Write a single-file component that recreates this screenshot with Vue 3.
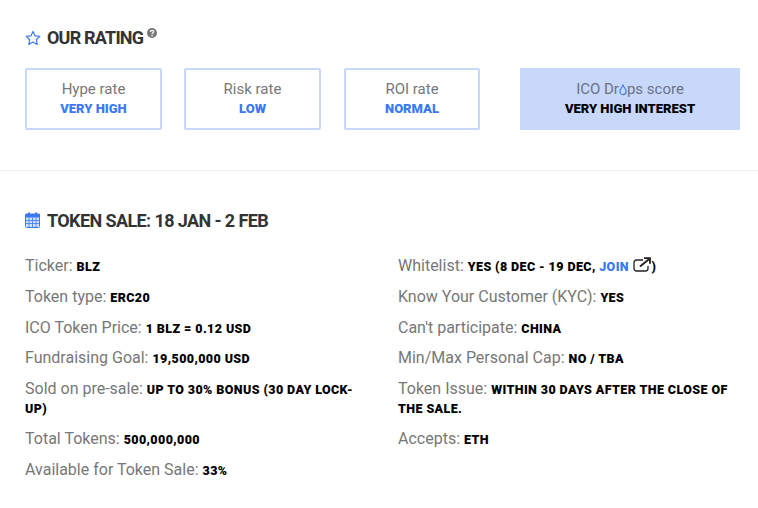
<script setup>
const boxes = [
  { label: 'Hype rate', value: 'VERY HIGH' },
  { label: 'Risk rate', value: 'LOW' },
  { label: 'ROI rate', value: 'NORMAL' },
]
const left = [
  ['Ticker:', 'BLZ'],
  ['Token type:', 'ERC20'],
  ['ICO Token Price:', '1 BLZ = 0.12 USD'],
  ['Fundraising Goal:', '19,500,000 USD'],
  ['Sold on pre-sale:', 'UP TO 30% BONUS (30 DAY LOCK-UP)'],
  ['Total Tokens:', '500,000,000'],
  ['Available for Token Sale:', '33%'],
]
const right = [
  ['Know Your Customer (KYC):', 'YES'],
  ["Can't participate:", 'CHINA'],
  ['Min/Max Personal Cap:', 'NO / TBA'],
  ['Token Issue:', 'WITHIN 30 DAYS AFTER THE CLOSE OF THE SALE.'],
  ['Accepts:', 'ETH'],
]
</script>

<template>
  <div class="page">
    <section class="rating">
      <h2 class="title">
        <svg class="star" viewBox="0 0 16 16" width="16" height="16">
          <path d="M8 1.4l2 4.4 4.8.6-3.500 3.300.9 4.800L8 12.100l-4.200 2.400.9-4.800L1.200 6.400 6 5.800z" fill="none" stroke="#3b78f5" stroke-width="1.2" stroke-linejoin="round"/>
        </svg>
        <span class="rating-text">OUR RATING</span>
        <svg class="help" viewBox="0 0 10 10" width="10" height="10">
          <circle cx="5" cy="5" r="5" fill="#777"/>
          <path d="M3.4 3.9c0-2 3.3-2 3.3-.1 0 1.2-1.6 1.1-1.6 2.2" fill="none" stroke="#fff" stroke-width="1.2"/>
          <rect x="4.4" y="6.8" width="1.4" height="1.4" fill="#fff"/>
        </svg>
      </h2>
      <div class="boxes">
        <div v-for="b in boxes" :key="b.label" class="box">
          <div class="box-label">{{ b.label }}</div>
          <div class="box-value">{{ b.value }}</div>
        </div>
        <div class="score">
          <div class="box-label score-label">ICO Dr<svg class="drop" viewBox="0 0 9 13" width="8" height="12"><path d="M4.5 1C3.6 3.4 1 5.4 1 8.2a3.5 3.5 0 0 0 7 0C8 5.4 5.4 3.4 4.5 1z" fill="none" stroke="#3b78f5" stroke-width="1.3"/></svg>ps score</div>
          <div class="score-value">VERY HIGH INTEREST</div>
        </div>
      </div>
    </section>

    <section class="sale">
      <h2 class="title">
        <svg class="cal" viewBox="0 0 15 16" width="15" height="16">
          <rect x="0.5" y="2" width="14" height="13.5" rx="1" fill="#cfdffc" stroke="#3b78f5"/>
          <rect x="0" y="2" width="15" height="3.5" fill="#3b78f5"/>
          <rect x="3" y="0.5" width="2" height="3" fill="#3b78f5"/>
          <rect x="10" y="0.5" width="2" height="3" fill="#3b78f5"/>
          <path d="M0.5 8.5h14M0.5 11.5h14M4 5.5v10M7.5 5.5v10M11 5.5v10" stroke="#3b78f5" stroke-width="0.8"/>
        </svg>
        <span>TOKEN SALE: 18 JAN - 2 FEB</span>
      </h2>
      <div class="cols">
        <div class="col col-left">
          <div v-for="r in left" :key="r[0]" class="row">{{ r[0] }} <b>{{ r[1] }}</b></div>
        </div>
        <div class="col col-right">
          <div class="row">Whitelist: <b>YES (8 DEC - 19 DEC, <span class="join">JOIN</span> <svg class="ext" viewBox="0 0 19 15" width="19" height="15"><path d="M10 3H3.5a2.5 2.5 0 0 0-2.5 2.500v6a2.500 2.500 0 0 0 2.500 2.500h9a2.500 2.500 0 0 0 2.500-2.500V9" fill="none" stroke="#222" stroke-width="1.300"/><path d="M7 9.500L16.500 1.800M11 1.200h6v5.500" fill="none" stroke="#222" stroke-width="1.800"/></svg>)</b></div>
          <div v-for="r in right" :key="r[0]" class="row">{{ r[0] }} <b>{{ r[1] }}</b></div>
        </div>
      </div>
    </section>
  </div>
</template>

<style scoped>
.page {
  width: 758px;
  height: 508px;
  background: #fff;
  font-family: Roboto, "Liberation Sans", sans-serif;
  overflow: hidden;
}
.rating {
  height: 171px;
  box-sizing: border-box;
  padding: 27px 18px 0 25px;
  border-bottom: 1px solid #eeeeee;
}
.title {
  display: flex;
  align-items: center;
  margin: 0;
  height: 20px;
  font-size: 18px;
  font-weight: 700;
  color: #333;
  letter-spacing: -0.6px;
}
.rating-text { letter-spacing: -0.8px; }
.star { margin-right: 6px; margin-top: 2px; }
.help { margin-left: 4px; margin-top: -8px; }
.cal { margin-right: 7px; }
.boxes {
  display: flex;
  margin-top: 21px;
  height: 62px;
}
.box {
  width: 137px;
  box-sizing: border-box;
  border: 2px solid #c8d8fb;
  border-radius: 2px;
  margin-right: 22px;
  text-align: center;
  padding-top: 9px;
}
.box:nth-child(2) { margin-right: 23px; }
.box:nth-child(3) { margin-right: 40px; width: 136px; }
.box-label {
  font-size: 15px;
  line-height: 20px;
  color: #777;
}
.box-value {
  font-size: 13px;
  line-height: 20px;
  font-weight: 900;
  color: #3b78f5;
}
.score {
  width: 220px;
  background: #c8d8fb;
  text-align: center;
  padding-top: 11px;
  box-sizing: border-box;
}
.score-label { color: #6b7184; }
.drop { vertical-align: -2px; }
.score-value {
  font-size: 13px;
  line-height: 20px;
  font-weight: 900;
  color: #000;
}
.sale {
  padding: 39px 18px 0 25px;
}
.cols {
  display: flex;
  margin-top: 26px;
}
.col { flex: none; }
.col-left { width: 340px; margin-right: 33px; }
.col-right { width: 340px; }
.row {
  font-size: 16px;
  line-height: 19px;
  color: #777;
  margin-bottom: 11.75px;
}
.row b {
  font-size: 12.5px;
  line-height: 1;
  font-weight: 900;
  color: #000;
  letter-spacing: 0.4px;
}
.join { color: #3b78f5; }
.ext { vertical-align: -1px; }
</style>
